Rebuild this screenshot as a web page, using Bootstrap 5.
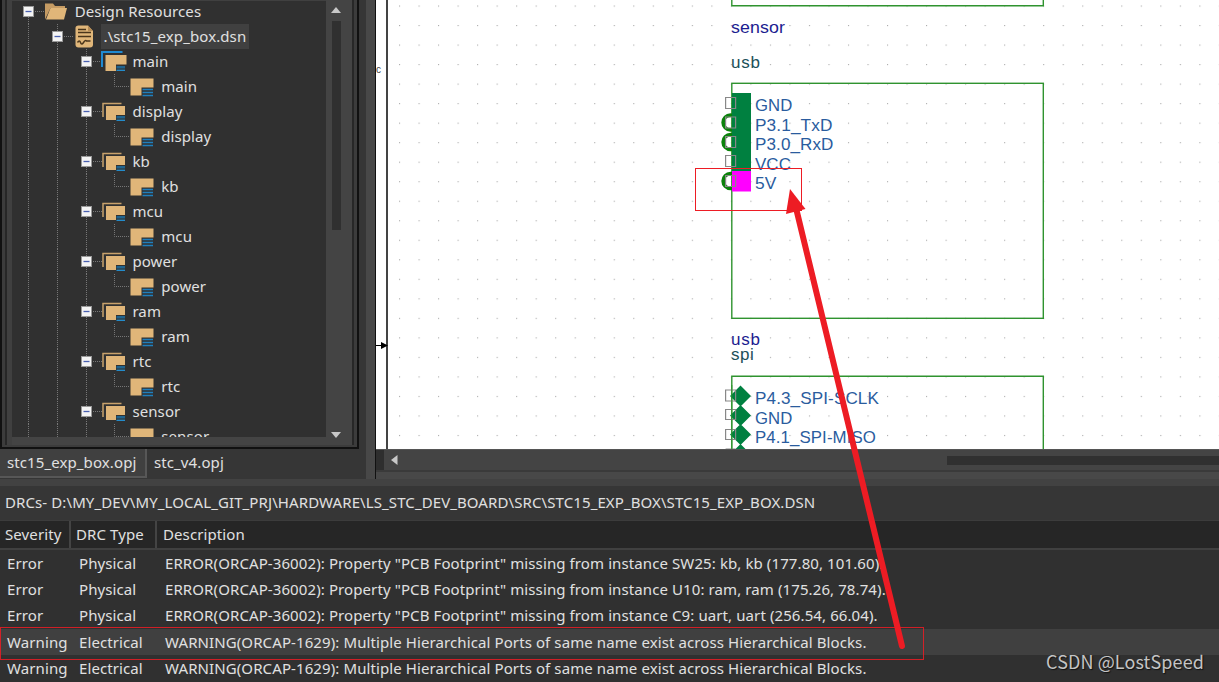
<!DOCTYPE html>
<html lang="en">
<head>
<meta charset="utf-8">
<title>stc15_exp_box</title>
<link href="https://cdn.jsdelivr.net/npm/bootstrap@5.3.0/dist/css/bootstrap.min.css" rel="stylesheet">
<style>
body{width:1219px;height:682px;overflow:hidden;background:#303030;color:#e0e0e0;font:15px/20px "Noto Sans","Noto Sans CJK SC",sans-serif;letter-spacing:.1px}
.top-area{height:479px}
.left-pane{width:366px;background:#363636}
.tree-frame{width:359px;height:448.5px;background:#444;border-left:2px solid #111;border-right:2px solid #111;border-bottom:2px solid #111}
.tree-bezel{border:solid #3c3c3c;border-width:0 3px 2px}
.tree-inner{border:solid #272727;border-width:0 2px}
.tree-gut{width:5px;background:#404040}
.tree-list{width:314px;height:437px;background:#303030;padding-left:2px;border-top:1px solid #404040}
.tree-row{height:25px;position:relative;top:-2px}
.tree-cell{width:28.85px;height:25px;flex:none}
.tree-cell svg{display:block;overflow:visible}
.tree-label{padding:0 3px;line-height:25px;height:25px}
.tree-label.chosen{background:#404040}
.vscroll{width:20px;background:#444}
.vscroll .thumb{width:9px;height:209px;background:#303030}
.file-tab{height:29px;line-height:27px;padding:0 7px}
.file-tab.current{width:147px;background:#404040;border:solid #575757;border-width:0 2px 2px 0}
.splitter{width:10px;background:#484848;border-right:1px solid #111}
.canvas-pane{width:843px}
.hscroll{height:21px;background:#444;border-top:1px solid #555}
.hscroll .stub{width:8px;background:#2e2e2e}
.hscroll .thumb{height:9px;width:272px;background:#303030}
.divider{height:7px;background:#424242}
.drc-title{height:35px;line-height:33px;padding-left:5px;background:#363636;border-bottom:1px solid #3c3c3c}
.drc-head{height:29px;line-height:27px;background:#262626;border-bottom:2px solid #404040}
.drc-row{height:26.2px;line-height:26px}
.drc-row.chosen{background:#404040}
.c1{width:71px}.c2{width:86px}
.drc-head .c1,.drc-head .c2{border-right:2px solid #444;padding-left:5px}
.drc-head .c3{padding-left:6px}
.drc-row .c1{padding-left:7px}.drc-row .c2{padding-left:8px}.drc-row .c3{padding-left:8px}
.overlay{left:0;top:0;pointer-events:none}
.watermark{right:15px;bottom:8px;font:18px/26px "Noto Sans CJK SC",sans-serif;color:#c4c4c4;text-shadow:1px 1px 1px #111}
</style>
<script src="https://cdn.jsdelivr.net/npm/bootstrap@5.3.0/dist/js/bootstrap.bundle.min.js"></script>
</head>
<body class="position-relative">
<div class="top-area d-flex">
  <section class="left-pane d-flex flex-column flex-shrink-0">
    <div class="tree-frame d-flex">
      <div class="tree-bezel d-flex flex-fill"><div class="tree-inner d-flex flex-fill">
        <div class="tree-gut"></div>
        <div class="tree-list overflow-hidden flex-shrink-0" id="tree"></div>
        <div class="vscroll d-flex flex-column align-items-center justify-content-between">
          <svg width="12" height="21"><path d="M1 13L6 7l5 6z" fill="#c8c8c8"/></svg>
          <div class="thumb"></div>
          <svg width="12" height="214"><path d="M1 201h10l-5 6z" fill="#c8c8c8"/></svg>
        </div>
      </div></div>
    </div>
    <div class="d-flex">
      <div class="file-tab current">stc15_exp_box.opj</div>
      <div class="file-tab">stc_v4.opj</div>
    </div>
  </section>
  <div class="splitter flex-shrink-0"></div>
  <section class="canvas-pane d-flex flex-column">
    <svg width="843" height="449" viewBox="376 0 843 449" font-family="Liberation Sans, sans-serif" font-size="17">
      <defs>
        <pattern id="dots" x="399" y="5.5" width="19.52" height="19.52" patternUnits="userSpaceOnUse"><rect width="1.1" height="1.1" fill="#aaa"/></pattern>
      </defs>
      <rect x="376" width="843" height="449" fill="#fff"/>
      <rect x="390" width="829" height="449" fill="url(#dots)"/>
      <path d="M387 0V449" stroke="#444" stroke-width="2"/>
      <text x="376" y="73" font-size="10" fill="#444">c</text>
      <path d="M376 345.5h7" stroke="#000"/><path d="M381 342l7 3.5-7 3.5z"/>
      <g fill="none" stroke="#2f932f" stroke-width="1.4">
        <path d="M731.8 0V5.8H1043.3V0"/><rect x="731.8" y="83.3" width="311.5" height="235"/><path d="M731.8 449V376.2H1043.3V449"/>
      </g>
      <g fill="#1c1c90"><text x="731" y="33" textLength="54" lengthAdjust="spacingAndGlyphs">sensor</text><text x="731" y="345" textLength="29">usb</text></g>
      <g fill="#20505a"><text x="731" y="68" textLength="29">usb</text><text x="731" y="360" textLength="23">spi</text></g>
      <g fill="none" stroke="#0a820a" stroke-width="3.6">
        <circle cx="730.5" cy="122.5" r="7.4"/><circle cx="730.5" cy="142" r="7.4"/><circle cx="730.5" cy="181" r="7.4"/>
      </g>
      <rect x="732" y="93" width="19" height="78" fill="#008040"/><rect x="732" y="171" width="19" height="20.5" fill="#f0f"/>
      <path d="M740.5 385.5l10.5 10.5-10.5 10.5-10.5-10.5zM740.5 405l10.5 10.5-10.5 10.5-10.5-10.5zM740.5 424l10.5 10.5-10.5 10.5-10.5-10.5zM740.5 444l10 10h-20z" fill="#008040"/>
      <g fill="none" stroke="#888" stroke-width="1.2">
        <path d="M725.6 97.5h10v11h-10zM725.6 117h10v11h-10zM725.6 136.500h10v11h-10zM725.6 155.500h10v11h-10zM725.6 175.500h10v11h-10zM725.6 390h10v11h-10zM725.6 409.500h10v10h-10zM725.6 429.500h10v10h-10zM725.6 449h10"/>
      </g>
      <path d="M731.8 385V449" stroke="#2f932f" stroke-width="1"/>
      <g fill="#2a5c9e">
        <text x="755" y="111" textLength="37.500" lengthAdjust="spacingAndGlyphs">GND</text>
        <text x="755" y="131" textLength="77.500" lengthAdjust="spacingAndGlyphs">P3.1_TxD</text>
        <text x="755" y="150" textLength="78.500" lengthAdjust="spacingAndGlyphs">P3.0_RxD</text>
        <text x="755" y="170" textLength="36" lengthAdjust="spacingAndGlyphs">VCC</text>
        <text x="755" y="189" textLength="21.500" lengthAdjust="spacingAndGlyphs">5V</text>
        <text x="755" y="404" textLength="124" lengthAdjust="spacingAndGlyphs">P4.3_SPI-SCLK</text>
        <text x="755" y="424" textLength="37.500" lengthAdjust="spacingAndGlyphs">GND</text>
        <text x="755" y="443" textLength="121" lengthAdjust="spacingAndGlyphs">P4.1_SPI-MISO</text>
      </g>
    </svg>
    <div class="hscroll d-flex align-items-center">
      <div class="stub align-self-stretch"></div>
      <svg width="20" height="20"><path d="M13.500 5v10L7 10z" fill="#c8c8c8"/></svg>
      <div class="thumb ms-auto"></div>
    </div>
    <div style="height:2px;background:#3a3a3a"></div>
    <div class="flex-fill" style="background:#484848"></div>
  </section>
</div>
<div class="divider"></div>
<section>
  <div class="drc-title"><span id="drcTitle">DRCs- D:\MY_DEV\MY_LOCAL_GIT_PRJ\HARDWARE\LS_STC_DEV_BOARD\SRC\STC15_EXP_BOX\STC15_EXP_BOX.DSN</span></div>
  <div class="drc-head d-flex"><div class="c1">Severity</div><div class="c2">DRC Type</div><div class="c3">Description</div></div>
  <div class="drc-row d-flex"><div class="c1">Error</div><div class="c2">Physical</div><div class="c3">ERROR(ORCAP-36002): Property "PCB Footprint" missing from instance SW25: kb, kb (177.80, 101.60).</div></div>
  <div class="drc-row d-flex"><div class="c1">Error</div><div class="c2">Physical</div><div class="c3">ERROR(ORCAP-36002): Property "PCB Footprint" missing from instance U10: ram, ram (175.26, 78.74).</div></div>
  <div class="drc-row d-flex"><div class="c1">Error</div><div class="c2">Physical</div><div class="c3">ERROR(ORCAP-36002): Property "PCB Footprint" missing from instance C9: uart, uart (256.54, 66.04).</div></div>
  <div class="drc-row d-flex chosen"><div class="c1">Warning</div><div class="c2">Electrical</div><div class="c3">WARNING(ORCAP-1629): Multiple Hierarchical Ports of same name exist across Hierarchical Blocks.</div></div>
  <div class="drc-row d-flex"><div class="c1">Warning</div><div class="c2">Electrical</div><div class="c3">WARNING(ORCAP-1629): Multiple Hierarchical Ports of same name exist across Hierarchical Blocks.</div></div>
</section>
<svg class="overlay position-absolute" width="1219" height="682">
  <g fill="none" stroke="#ed1c24"><rect x="695.5" y="168.500" width="106" height="42"/><rect x=".5" y="627.500" width="923" height="32" stroke-opacity=".85"/></g>
  <path d="M796 208L902 646" stroke="#ed1c24" stroke-width="6" stroke-linecap="round"/>
  <path d="M790 189l15.500 20-19.500 5z" fill="#ed1c24"/>
</svg>
<div class="watermark position-absolute">CSDN @LostSpeed</div>
<script>
const dash = 'stroke="#777" stroke-dasharray="1 1"';
const cell = s => `<div class="tree-cell"><svg width="29" height="25">${s}</svg></div>`;
const line = cell(`<path d="M14.500 0V25" ${dash}/>`);
const blank = cell('');
const toggle = (up, down) => cell(`<path d="M14.500 ${up ? 0 : 12}V${down ? 25 : 12}M19 12.500H30" ${dash}/><rect x="9.500" y="7.500" width="10" height="10" fill="#f4f4f4" stroke="#999"/><path d="M11.500 12.500h6" stroke="#4a60b0" stroke-width="1.300"/>`);
const corner = more => cell(`<path d="M13.500 0V12.500H29" fill="none" ${dash}/>`);
const icons = {
  folder: '<path d="M2 20.500V4.500H10l2 2.500H22v2H7.500z" fill="#c59b63"/><path d="M7.500 9H24l-3 11.500H3z" fill="#e0b679"/>',
  file: '<path d="M6.500 1.500H16L21 7V20.500q0 3-3 3H6.500q-3 0-3-3V4q0-2.500 3-2.500z" fill="#e0b679"/><path d="M16 1.500V7h5z" fill="#b58b55"/><path d="M6 5.500h8M6 8.500h13M6 12.500h13M5.500 18.500q2-3 3 0t3 0t3-1.500h4" fill="none" stroke="#49351b" stroke-width="1.500"/>',
  group: '<path d="M2 18V4.500H20.500" fill="none" stroke="#c9a26b" stroke-width="1.500"/><path d="M5 7H24V16H15V21H5z" fill="#e0b679"/><path d="M15.500 17h8.500v2.500h-8.500z" fill="#20648f"/><path d="M15.500 21.300h8.500" stroke="#2492d4" stroke-width="1.300"/>',
  leaf: '<path d="M1.500 4.500H24.500V13.500H12.500V21.500H1.500z" fill="#e0b679"/><path d="M13.500 15.500h10.500M13.500 18.500h10.500M13.500 21.500h10.500" stroke="#1f7fbe" stroke-width="1.700"/>'
};
icons.root = icons.group.replace('M2 18V4.500H20.500" fill="none" stroke="#c9a26b" stroke-width="1.500', 'M1 18V3H21.500" fill="none" stroke="#208ad0" stroke-width="2').replace('M5 7H24V16H15V21H5z', 'M4.500 6H25.500V15.500H15V22H4.500z');
const row = (cells, icon, text, cls = '') => `<div class="tree-row d-flex">${cells}${cell(icons[icon])}<div class="tree-label ${cls}">${text}</div></div>`;
let html = row(toggle(0, 1), 'folder', 'Design Resources') + row(line + toggle(1, 1), 'file', '.\\stc15_exp_box.dsn', 'chosen');
for (const name of ['main', 'display', 'kb', 'mcu', 'power', 'ram', 'rtc', 'sensor'])
  html += row(line + line + toggle(1, 1), name === 'main' ? 'root' : 'group', name) + row(line + line + line + corner(), 'leaf', name);
document.getElementById('tree').innerHTML = html;
</script>
</body>
</html>
